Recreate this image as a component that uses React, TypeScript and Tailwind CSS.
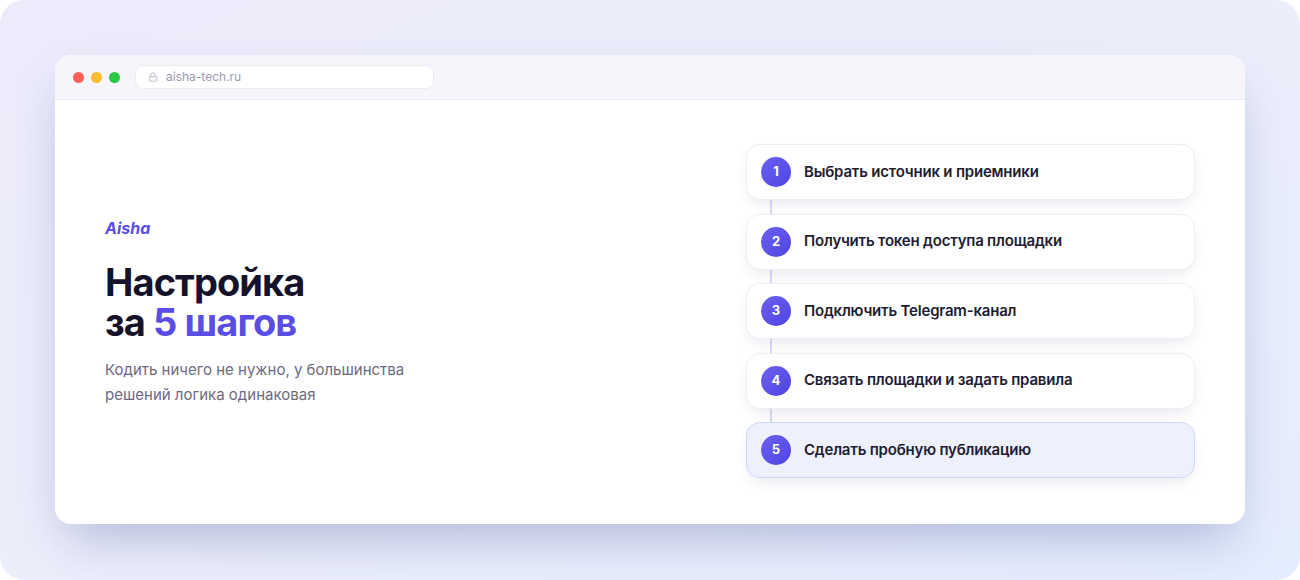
import { Lock } from 'lucide-react'

type Step = {
  id: number
  title: string
  active?: boolean
}

const steps: Step[] = [
  { id: 1, title: 'Выбрать источник и приемники' },
  { id: 2, title: 'Получить токен доступа площадки' },
  { id: 3, title: 'Подключить Telegram-канал' },
  { id: 4, title: 'Связать площадки и задать правила' },
  { id: 5, title: 'Сделать пробную публикацию', active: true },
]

const App = () => {
  return (
    <div className="w-[1300px] h-[580px] bg-white font-['Inter',sans-serif]">
      <div className="h-full rounded-[24px] bg-gradient-to-br from-[#ecebfb] via-[#eceefb] to-[#e4edfd] p-[55px] pb-[56px]">
        {/* BROWSER WINDOW */}
        <div className="h-full rounded-[16px] bg-white overflow-hidden shadow-[0_24px_50px_-12px_rgba(70,80,150,0.35)] flex flex-col">
          {/* TITLE BAR */}
          <div className="h-[45px] bg-[#f6f5fb] border-b border-[#ecebf3] flex items-center px-[18px] gap-[15px]">
            <div className="flex gap-[7px]">
              <span className="w-[11px] h-[11px] rounded-full bg-[#ff5f57]" />
              <span className="w-[11px] h-[11px] rounded-full bg-[#febc2e]" />
              <span className="w-[11px] h-[11px] rounded-full bg-[#28c840]" />
            </div>
            <div className="w-[299px] h-[24px] rounded-[8px] bg-white border border-[#ebeaf2] flex items-center gap-[8px] px-[12px]">
              <Lock size={10} strokeWidth={2} className="text-[#b5b4c4]" />
              <span className="text-[12px] text-[#9b9aae]">aisha-tech.ru</span>
            </div>
          </div>

          {/* CONTENT */}
          <div className="flex-1 flex items-center justify-between px-[50px]">
            <div>
              <p className="text-[16px] font-bold italic text-[#5a4de6] leading-[20px]">Aisha</p>
              <h1 className="mt-[24px] text-[38px] font-bold leading-[40px] tracking-[-0.9px] text-[#15132a]">
                Настройка
                <br />
                за <span className="text-[#5a4de6]">5 шагов</span>
              </h1>
              <p className="mt-[15px] text-[15px] leading-[25px] text-[#6b6a80]">
                Кодить ничего не нужно, у большинства
                <br />
                решений логика одинаковая
              </p>
            </div>

            {/* STEPS */}
            <div className="relative w-[449px] flex flex-col gap-[13.5px] mb-[2px]">
              <div className="absolute left-[24px] top-[30px] bottom-[30px] w-[2px] bg-[#dcd9f3]" />
              {steps.map((step) => (
                <div
                  key={step.id}
                  className={`relative h-[56px] rounded-[14px] border flex items-center gap-[13px] px-[14px] shadow-[0_6px_16px_-6px_rgba(60,60,120,0.18)] ${
                    step.active
                      ? 'bg-[#eef1fd] border-[#cfd6f8]'
                      : 'bg-white border-[#eeedf4]'
                  }`}
                >
                  <span className="w-[30px] h-[30px] rounded-full bg-gradient-to-br from-[#6d5ff2] to-[#4d45e2] flex items-center justify-center text-white text-[13px] font-bold">
                    {step.id}
                  </span>
                  <span className="text-[15px] font-semibold tracking-[-0.2px] text-[#1e1c30]">{step.title}</span>
                </div>
              ))}
            </div>
          </div>
        </div>
      </div>
    </div>
  )
}

export default App
